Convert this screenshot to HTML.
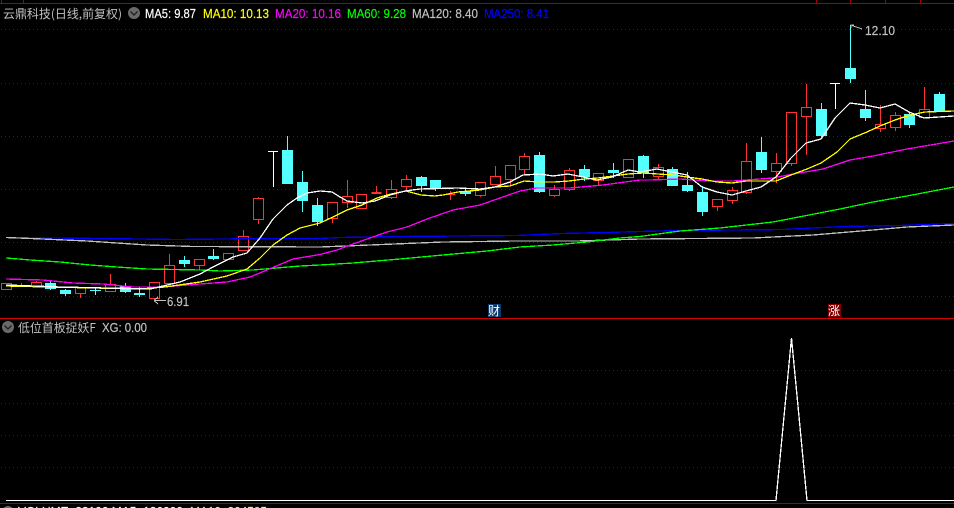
<!DOCTYPE html>
<html>
<head>
<meta charset="utf-8">
<style>
html,body{margin:0;padding:0;background:#000;width:954px;height:508px;overflow:hidden}
svg{display:block;position:absolute;left:0;top:0}
text{font-family:"Liberation Sans","WenQuanYi Zen Hei","Noto Sans CJK SC",sans-serif;font-size:13px;stroke-width:.2px;stroke:currentColor}
.cn{font-family:"WenQuanYi Zen Hei","Noto Sans CJK SC","Liberation Sans",sans-serif;font-size:12px;stroke-width:0}
</style>
</head>
<body>
<svg width="954" height="508" viewBox="0 0 954 508" xmlns="http://www.w3.org/2000/svg">
<rect width="954" height="508" fill="#000"/>
<!-- grid -->
<g stroke="#900000" stroke-width="1" stroke-dasharray="1 3" fill="none" shape-rendering="crispEdges">
<path d="M1 29.5H954M1 83.5H954M1 136.5H954M1 189.5H954M1 242.5H954M1 296.5H954"/>
<path d="M1 370.5H954M1 403.5H954M1 435.5H954M1 467.5H954"/>
</g>
<!-- frame -->
<g stroke="#a80000" stroke-width="1" fill="none" shape-rendering="crispEdges">
<path d="M0 3.5H954M1.5 0V3M23.5 0V3M816.5 0V3M850.5 0V3M885.5 0V3M920.5 0V3"/>
<path d="M0 503.5H954"/>
</g>
<path d="M0 318.5H954" stroke="#d00000" stroke-width="1" shape-rendering="crispEdges"/>
<!-- red candles -->
<path shape-rendering="crispEdges" fill="none" stroke="#ff3232" stroke-width="1" d="
M1.5 283.5h10v6h-10z
M16.5 286.5h10M21.5 283V287
M31.5 282.5h10v4h-10zM36.5 281V282.5
M75.5 287.5h10v6h-10zM80.5 293.5V298
M105.5 284.5h10v7h-10zM110.5 274V284.5
M149.5 282.5h10v16h-10z
M164.5 265.5h10v18h-10zM169.5 254V265.5
M194.5 259.5h10v6h-10zM199.5 265.5V270
M223.5 253.5h10v6h-10z
M238.5 236.5h10v14h-10zM243.5 230V236.5
M253.5 198.5h10v21h-10zM258.5 197V198.5M258.5 219.5V224
M327.5 202.5h10v16h-10zM332.5 218.5V223
M342.5 196.5h10v6h-10zM347.5 180V196.5M347.5 202.5V208
M356.5 194.5h10v14h-10z
M371.5 192.5h10M371.5 193.5h10M376.5 186V192
M386.5 189.5h10v8h-10zM391.5 180V189.5M391.5 197.5V199
M401.5 179.5h10v7h-10zM406.5 175V179.5M406.5 186.5V190
M445.5 194.5h10M450.5 191V200
M475.5 182.5h10v13h-10zM480.5 195.5V197
M490.5 176.5h10v8h-10zM495.5 166V176.5
M505.5 165.5h10v14h-10zM510.5 179.5V186
M519.5 156.5h10v13h-10zM524.5 153V156.5M524.5 169.5V175
M549.5 189.5h10v6h-10zM554.5 185V189.5M554.5 195.5V197
M564.5 170.5h10v19h-10zM569.5 168V170.5M569.5 189.5V191
M593.5 173.5h10v7h-10zM598.5 180.5V185
M623.5 159.5h10v18h-10z
M653.5 167.5h10v9h-10zM658.5 164V167.5M658.5 176.5V179
M712.5 199.5h10v7h-10zM717.5 206.5V211
M727.5 190.5h10v10h-10zM732.5 187V190.5M732.5 200.5V204
M741.5 161.5h10v31h-10zM746.5 143V161.5M746.5 192.5V194
M771.5 163.5h10v8h-10zM776.5 153V163.5M776.5 171.5V183
M786.5 112.5h10v51h-10zM791.5 163.5V166
M801.5 107.5h10v9h-10zM806.5 84V107.5M806.5 116.5V155
M875.5 124.5h10v4h-10zM880.5 105V124.5M880.5 128.5V132
M890.5 115.5h10v12h-10zM895.5 112V115.5M895.5 127.5V131
M919.5 109.5h10v8h-10zM924.5 87V109.5"/>
<!-- cyan wicks -->
<path shape-rendering="crispEdges" fill="none" stroke="#54ffff" stroke-width="1" d="
M50.5 280V290M65.5 289V296M95.5 287V295M125.5 283V293M139.5 287V297M184.5 256V267M213.5 249V260M287.5 136V150M302.5 171V212M317.5 198V226M421.5 176V192M435.5 180V191M465.5 189V196M539.5 152V193M584.5 165V181M613.5 163V178M643.5 155V178M672.5 167V186M687.5 172V192M702.5 186V216M761.5 137V173M821.5 103V137M850.5 25V83M865.5 90V121M909.5 113V128M939.5 92V111"/>
<!-- cyan bodies -->
<path shape-rendering="crispEdges" fill="#54ffff" d="
M45 283h11v6h-11z
M60 290h11v4h-11z
M90 290h11v1h-11z
M120 286h11v6h-11z
M134 293h11v2h-11z
M179 260h11v4h-11z
M208 256h11v3h-11z
M282 150h11v34h-11z
M297 182h11v19h-11z
M312 205h11v17h-11z
M416 177h11v9h-11z
M430 180h11v9h-11z
M460 191h11v3h-11z
M534 155h11v37h-11z
M579 169h11v8h-11z
M608 170h11v3h-11z
M638 156h11v17h-11z
M667 169h11v17h-11z
M682 185h11v6h-11z
M697 192h11v20h-11z
M756 152h11v18h-11z
M816 109h11v27h-11z
M845 68h11v11h-11z
M860 109h11v9h-11z
M904 114h11v11h-11z
M934 94h11v17h-11z"/>
<!-- doji T -->
<path shape-rendering="crispEdges" fill="none" stroke="#fff" stroke-width="1" d="M268 151.5H278M273.5 151V187M830 83.5H840M835.5 83V109"/>
<!-- MA lines -->
<g fill="none" stroke-width="1.3" shape-rendering="crispEdges" stroke-linejoin="round">
<polyline stroke="#0000ff" points="6,237.5 100,238.5 177,239.5 267,238.5 320,238.5 340,237.5 400,236.5 517,235.5 562,233.5 607,232.5 640,231.5 680,230.5 783,229.5 843,226.5 900,225.5 954,223.5"/>
<polyline stroke="#c0c0c0" points="6,237.5 43,239 87,241 117,243 147,245 193,246.5 320,247 370,245 443,242 517,241 577,241 640,239 753,238 813,235 873,230 907,227 954,225"/>
<polyline stroke="#00ff00" points="6,258 30,260 60,262 90,265 117,267 147,269 200,270 220,271 253,270 300,266 320,265 353,263 400,259 443,255 487,251 520,247 553,245 587,242 620,238 640,236.5 680,231 720,228 773,222 840,209 873,202 907,196 954,187"/>
<polyline stroke="#ff00ff" points="6,279 43,280 73,283 103,284 133,287 163,287 200,284 227,282 250,277 267,270 293,259 320,254.5 337,250 353,244 370,238 387,232 407,227 427,219 453,210 480,205 500,198 520,191 537,188 570,188 603,185 640,180 650,180 680,179 710,181 733,181 773,178 793,174 823,169 850,160 873,156 907,149 954,141"/>
<polyline stroke="#ffff00" points="6,286 50,287 95,288 139,289 165,287 200,282 227,276 247,269 260,258 273,245 287,235 300,228 320,223 333,217 347,210 362,205 377,198 391,194 406,191 421,195 435,196 443,195 458,192 480,190 495,187 510,186 524,181 539,182 554,182 569,181 584,179 598,178 613,176 628,174 643,173 658,174 673,175 687,177 702,179 717,182 732,183 746,181 761,181 776,181 791,175 807,169 821,163 837,152 850,139 867,132 880,126 895,120 910,115 925,112 954,111"/>
<polyline stroke="#ffffff" points="6,285 60,287 105,288 150,289 163,286 180,282 200,274 213,267 233,257 247,253 260,238 273,219 287,205 297,198 307,193 320,191 332,192 340,197 347,201 362,203 375,201 390,195 405,191 420,189 457,188 480,189 495,187 510,182 523,175 540,174 553,176 568,174 583,177 597,180 612,177 628,170 640,172 657,169 672,172 687,175 702,187 717,192 732,195 746,191 761,187 776,177 791,158 806,143 821,139 835,118 850,103 865,105 880,108 895,104 909,112 924,118 939,117 954,116"/>
</g>
<!-- header pane 1 -->
<text class="cn" x="3" y="18" fill="#c0c0c0" textLength="119" lengthAdjust="spacingAndGlyphs">云鼎科技(日线,前复权)</text>
<circle cx="134" cy="13" r="6" fill="#6a6a6a"/>
<path d="M130.5 11.5L134 15L137.5 11.5" fill="none" stroke="#222" stroke-width="1.4"/>
<text x="145" y="18" fill="#ffffff" color="#ffffff" textLength="51" lengthAdjust="spacingAndGlyphs">MA5: 9.87</text>
<text x="203" y="18" fill="#ffff00" color="#ffff00" textLength="66" lengthAdjust="spacingAndGlyphs">MA10: 10.13</text>
<text x="275" y="18" fill="#ff00ff" color="#ff00ff" textLength="66" lengthAdjust="spacingAndGlyphs">MA20: 10.16</text>
<text x="347" y="18" fill="#00ff00" color="#00ff00" textLength="59" lengthAdjust="spacingAndGlyphs">MA60: 9.28</text>
<text x="412" y="18" fill="#c0c0c0" color="#c0c0c0" textLength="66" lengthAdjust="spacingAndGlyphs">MA120: 8.40</text>
<text x="484" y="18" fill="#0000ff" color="#0000ff" textLength="65" lengthAdjust="spacingAndGlyphs">MA250: 8.41</text>
<!-- high / low labels -->
<path d="M851 28V25h3M852 25.5L862 29" fill="none" stroke="#c0c0c0" stroke-width="1" shape-rendering="crispEdges"/>
<text x="865" y="35" fill="#c0c0c0" color="#c0c0c0" textLength="30" lengthAdjust="spacingAndGlyphs">12.10</text>
<path d="M154 300.5H166M154 300.5L158 297M154 300.5L158 304" fill="none" stroke="#c0c0c0" stroke-width="1" shape-rendering="crispEdges"/>
<text x="167" y="306" fill="#c0c0c0" color="#c0c0c0" textLength="22" lengthAdjust="spacingAndGlyphs">6.91</text>
<!-- badges -->
<rect x="488" y="304" width="13" height="13" fill="#0c3a6c"/>
<text class="cn" x="488" y="315" fill="#ffffff">财</text>
<rect x="828" y="304" width="13" height="13" fill="#800000"/>
<text class="cn" x="828" y="315" fill="#ffffff">涨</text>
<!-- lower pane header -->
<circle cx="8" cy="327" r="6" fill="#6a6a6a"/>
<path d="M4.5 325.5L8 329L11.5 325.5" fill="none" stroke="#222" stroke-width="1.4"/>
<text class="cn" x="18" y="332" fill="#c0c0c0" textLength="78" lengthAdjust="spacingAndGlyphs">低位首板捉妖F</text>
<text x="102" y="332" fill="#c0c0c0" color="#c0c0c0" textLength="45" lengthAdjust="spacingAndGlyphs">XG: 0.00</text>
<!-- spike -->
<polyline points="6,500.5 776,500.5 791.5,338 807,500.5 954,500.5" fill="none" stroke="#ffffff" stroke-width="1.3" shape-rendering="crispEdges"/>
<!-- clipped third pane header -->
<circle cx="8" cy="512" r="6" fill="#6a6a6a"/>
<text x="18" y="516" fill="#ffffff" color="#ffffff" textLength="165" lengthAdjust="spacingAndGlyphs">VOLUME: 33100 MA5: 136000</text>
<text x="190" y="516" fill="#ffff00" color="#ffff00" textLength="77" lengthAdjust="spacingAndGlyphs">MA10: 204595</text>
</svg>
</body>
</html>
